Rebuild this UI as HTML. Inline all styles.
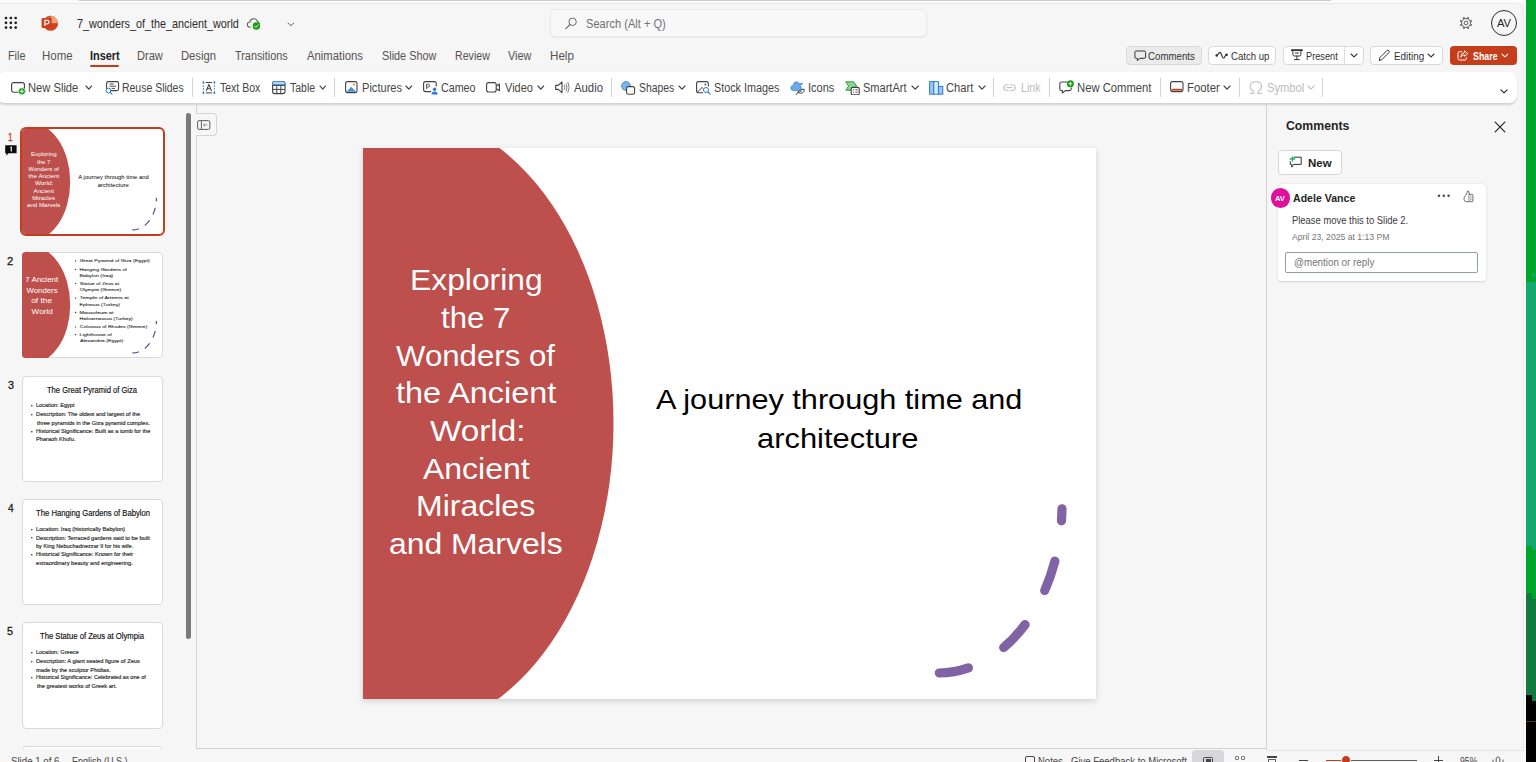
<!DOCTYPE html>
<html>
<head>
<meta charset="utf-8">
<title>7_wonders_of_the_ancient_world</title>
<style>
*{box-sizing:border-box;margin:0;padding:0}
html,body{width:1536px;height:762px;overflow:hidden;background:#f6f6f7;font-family:"Liberation Sans",sans-serif;color:#242424}
.abs{position:absolute}
.t{position:absolute;white-space:nowrap;line-height:1;transform-origin:0 0;font-family:"Liberation Sans",sans-serif}
#app{position:absolute;left:0;top:0;width:1536px;height:762px;overflow:hidden;background:#f6f6f7}
#ribbon{position:absolute;left:-3px;top:71.8px;width:1519.8px;height:31.4px;background:#fff;border-radius:8px;box-shadow:0 1.2px 2px rgba(0,0,0,.15)}
#slide{position:absolute;left:363px;top:148px;width:733px;height:551px;background:#fff;box-shadow:0 2px 6px rgba(0,0,0,.16);overflow:hidden}
</style>
</head>
<body>
<div id="app">
<!-- title bar -->
<div class="abs" style="left:0.00px;top:0.00px;width:1526.00px;height:3.20px;background:#fbfbfb"></div>
<div class="abs" style="left:78.60px;top:0.00px;width:1252.40px;height:0.90px;background:#cdcdcb"></div>
<svg class="abs" style="left:0.00px;top:0.00px;" width="24.00" height="40.00" viewBox="0 0 24 40" fill="none"><circle cx="6.00" cy="18.00" r="1.35" fill="#1b1b1b"/><circle cx="10.85" cy="18.00" r="1.35" fill="#1b1b1b"/><circle cx="15.70" cy="18.00" r="1.35" fill="#1b1b1b"/><circle cx="6.00" cy="22.80" r="1.35" fill="#1b1b1b"/><circle cx="10.85" cy="22.80" r="1.35" fill="#1b1b1b"/><circle cx="15.70" cy="22.80" r="1.35" fill="#1b1b1b"/><circle cx="6.00" cy="27.60" r="1.35" fill="#1b1b1b"/><circle cx="10.85" cy="27.60" r="1.35" fill="#1b1b1b"/><circle cx="15.70" cy="27.60" r="1.35" fill="#1b1b1b"/></svg>
<svg class="abs" style="left:38.00px;top:12.00px;" width="24.00" height="22.00" viewBox="38 12 24 22" fill="none"><defs><clipPath id="lc"><circle cx="50.6" cy="23.2" r="7.4"/></clipPath></defs><g clip-path="url(#lc)"><rect x="43" y="15" width="16" height="17" fill="#d9482a"/><rect x="43" y="15" width="8" height="8.4" fill="#e2593f"/><rect x="51" y="15" width="8" height="8.4" fill="#f0a372"/><rect x="43" y="23.4" width="16" height="9" fill="#cf4422"/></g><rect x="41.6" y="18.1" width="10.1" height="9.9" rx="0.8" fill="#c9411d"/><path d="M44.9 26 V20.3 H47 Q49 20.3 49 22.1 Q49 23.9 47 23.9 H45" stroke="#fbeee9" stroke-width="1.25" fill="none"/></svg>
<span class="t" style="left:77.36px;top:18.00px;font-size:12.60px;color:#2b2b2b;transform:scaleX(0.8593);">7_wonders_of_the_ancient_world</span>
<svg class="abs" style="left:247.20px;top:17.00px;" width="14.00" height="13.00" viewBox="0 0 14 13" fill="none"><path d="M3.2 10.2 H2.9 A2.6 2.6 0 0 1 2.9 5 A3.9 3.9 0 0 1 10.4 4.3 A2.9 2.9 0 0 1 12.3 6.4" stroke="#5c5c5c" stroke-width="1.1" stroke-linecap="round" fill="none"/><circle cx="9.4" cy="9" r="3.7" fill="#13a10e"/><path d="M7.7 9.1 L8.9 10.3 L11.1 7.9" stroke="#fff" stroke-width="1" fill="none" stroke-linecap="round" stroke-linejoin="round"/></svg>
<svg class="abs" style="left:286.50px;top:21.90px;" width="7.80" height="4.75" viewBox="0 0 7.8 4.75" fill="none"><path d="M1 1 L3.90 3.75 L6.80 1" stroke="#616161" stroke-width="1.00" stroke-linecap="round" stroke-linejoin="round"/></svg>
<div class="abs" style="left:550.00px;top:9.00px;width:377.00px;height:28.00px;background:#f8f8f8;border:1px solid #e9e9e9;border-radius:5px;box-shadow:0 1px 1px rgba(0,0,0,.05)"></div>
<svg class="abs" style="left:564.50px;top:17.30px;" width="12.50" height="12.50" viewBox="0 0 12.5 12.5" fill="none"><circle cx="7.6" cy="4.8" r="3.7" stroke="#6b6b6b" stroke-width="1"/><path d="M5 7.5 L0.8 11.7" stroke="#6b6b6b" stroke-width="1.1" stroke-linecap="round"/></svg>
<span class="t" style="left:586.40px;top:18.00px;font-size:12.00px;color:#707070;transform:scaleX(0.9235);">Search (Alt + Q)</span>
<svg class="abs" style="left:1458.60px;top:16.20px;" width="14.00" height="14.00" viewBox="0 0 14 14" fill="none"><g transform="translate(7,7)" stroke="#505050" fill="none"><circle r="1.9" stroke-width="0.9"/><circle r="4.5" stroke-width="0.9"/><path d="M4.53 1.80 L5.73 2.37" stroke-width="1.7"/><path d="M1.88 4.34 L2.37 5.73" stroke-width="1.7"/><path d="M-1.88 4.34 L-2.37 5.73" stroke-width="1.7"/><path d="M-4.53 1.80 L-5.73 2.37" stroke-width="1.7"/><path d="M-4.53 -1.80 L-5.73 -2.37" stroke-width="1.7"/><path d="M-1.88 -4.34 L-2.37 -5.73" stroke-width="1.7"/><path d="M1.88 -4.34 L2.37 -5.73" stroke-width="1.7"/><path d="M4.53 -1.80 L5.73 -2.37" stroke-width="1.7"/></g></svg>
<div class="abs" style="left:1491.20px;top:10.20px;width:26.00px;height:26.00px;border:1px solid #2b2b2b;border-radius:50%;"></div>
<span class="t" style="left:1497.30px;top:19.00px;font-size:10.00px;color:#242424;transform:scaleX(1.1155);">AV</span>
<!-- tabs -->
<span class="t" style="left:8.33px;top:50.00px;font-size:12.00px;color:#555250;transform:scaleX(0.9020);">File</span>
<span class="t" style="left:41.78px;top:50.00px;font-size:12.00px;color:#555250;transform:scaleX(0.9561);">Home</span>
<span class="t" style="left:136.81px;top:50.00px;font-size:12.00px;color:#555250;transform:scaleX(0.9228);">Draw</span>
<span class="t" style="left:180.90px;top:50.00px;font-size:12.00px;color:#555250;transform:scaleX(0.9343);">Design</span>
<span class="t" style="left:234.68px;top:50.00px;font-size:12.00px;color:#555250;transform:scaleX(0.9050);">Transitions</span>
<span class="t" style="left:307.20px;top:50.00px;font-size:12.00px;color:#555250;transform:scaleX(0.9415);">Animations</span>
<span class="t" style="left:381.71px;top:50.00px;font-size:12.00px;color:#555250;transform:scaleX(0.9056);">Slide Show</span>
<span class="t" style="left:454.75px;top:50.00px;font-size:12.00px;color:#555250;transform:scaleX(0.8847);">Review</span>
<span class="t" style="left:508.37px;top:50.00px;font-size:12.00px;color:#555250;transform:scaleX(0.9070);">View</span>
<span class="t" style="left:549.77px;top:50.00px;font-size:12.00px;color:#555250;transform:scaleX(0.9690);">Help</span>
<span class="t" style="left:89.69px;top:50.00px;font-size:12.00px;color:#242424;font-weight:700;transform:scaleX(0.9097);">Insert</span>
<div class="abs" style="left:89.80px;top:64.80px;width:29.60px;height:2.00px;background:#c43e1c;border-radius:1px"></div>
<div class="abs" style="left:1126.40px;top:45.90px;width:75.30px;height:18.90px;border:1px solid #d9d9d9;border-radius:4px;background:#ebebeb"></div>
<div class="abs" style="left:1208.40px;top:45.90px;width:67.90px;height:18.90px;border:1px solid #d9d9d9;border-radius:4px;background:#fff"></div>
<div class="abs" style="left:1283.40px;top:45.90px;width:80.20px;height:18.90px;border:1px solid #d9d9d9;border-radius:4px;background:#fff"></div>
<div class="abs" style="left:1344.30px;top:46.50px;width:1.00px;height:17.80px;background:#dcdcdc"></div>
<div class="abs" style="left:1370.30px;top:45.90px;width:72.50px;height:18.90px;border:1px solid #d9d9d9;border-radius:4px;background:#fff"></div>
<div class="abs" style="left:1449.50px;top:45.90px;width:67.30px;height:18.90px;border-radius:4px;background:#c43e1c"></div>
<span class="t" style="left:1148.32px;top:51.00px;font-size:11.00px;color:#323130;transform:scaleX(0.8804);">Comments</span>
<span class="t" style="left:1231.22px;top:51.00px;font-size:11.00px;color:#323130;transform:scaleX(0.8690);">Catch up</span>
<span class="t" style="left:1305.86px;top:51.00px;font-size:11.00px;color:#323130;transform:scaleX(0.8360);">Present</span>
<span class="t" style="left:1393.51px;top:51.00px;font-size:11.00px;color:#323130;transform:scaleX(0.8951);">Editing</span>
<span class="t" style="left:1472.56px;top:51.00px;font-size:11.00px;color:#ffffff;font-weight:700;transform:scaleX(0.8029);">Share</span>
<svg class="abs" style="left:1133.50px;top:49.80px;" width="13.00" height="12.00" viewBox="0 0 13 12" fill="none"><path d="M2.2 1 H10.3 Q11.6 1 11.6 2.3 V7 Q11.6 8.3 10.3 8.3 H6 L3.4 10.6 V8.3 H2.2 Q0.9 8.3 0.9 7 V2.3 Q0.9 1 2.2 1 Z" stroke="#323130" stroke-width="1" stroke-linejoin="round"/></svg>
<svg class="abs" style="left:1215.30px;top:50.80px;" width="14.00" height="8.50" viewBox="0 0 14 8.5" fill="none"><path d="M1.6 4.4 C3.2 4.4 3.4 1.4 4.9 1.4 C6.6 1.4 6.8 7.2 8.5 7.2 C10 7.2 10.2 3.6 11.6 3.6" stroke="#323130" stroke-width="1.15" stroke-linecap="round" fill="none"/><circle cx="1.7" cy="4.5" r="1.25" fill="#323130"/><circle cx="11.6" cy="3.7" r="1.25" fill="#323130"/></svg>
<svg class="abs" style="left:1290.80px;top:48.90px;" width="12.00" height="12.00" viewBox="0 0 12 12" fill="none"><path d="M0.6 1.2 H11.2" stroke="#323130" stroke-width="1.7" stroke-linecap="round"/><path d="M1.9 1.6 V5.6 Q1.9 7 3.3 7 H8.5 Q9.9 7 9.9 5.6 V1.6 M5.9 7 V10.4 M3.4 10.6 H8.4" stroke="#323130" stroke-width="1" stroke-linecap="round" stroke-linejoin="round" fill="none"/><path d="M3.9 4 H7.9" stroke="#323130" stroke-width="1"/></svg>
<svg class="abs" style="left:1349.73px;top:53.32px;" width="8.05" height="4.91" viewBox="0 0 8.05 4.9075" fill="none"><path d="M1 1 L4.02 3.91 L7.05 1" stroke="#323130" stroke-width="1.05" stroke-linecap="round" stroke-linejoin="round"/></svg>
<svg class="abs" style="left:1377.60px;top:49.20px;" width="13.00" height="13.00" viewBox="0 0 13 13" fill="none"><path d="M1.2 11.6 L1.9 8.6 L8.9 1.6 Q9.9 0.7 10.9 1.7 Q11.8 2.7 10.9 3.6 L3.9 10.6 Z" stroke="#323130" stroke-width="1" stroke-linejoin="round"/></svg>
<svg class="abs" style="left:1426.73px;top:53.32px;" width="8.05" height="4.91" viewBox="0 0 8.05 4.9075" fill="none"><path d="M1 1 L4.02 3.91 L7.05 1" stroke="#323130" stroke-width="1.05" stroke-linecap="round" stroke-linejoin="round"/></svg>
<svg class="abs" style="left:1457.00px;top:49.80px;" width="12.00" height="11.00" viewBox="0 0 12 11" fill="none"><path d="M4.6 1.7 H2.6 Q1 1.7 1 3.3 V8.4 Q1 10 2.6 10 H7.8 Q9.4 10 9.4 8.4 V7.6" stroke="#fff" stroke-width="1" stroke-linecap="round"/><path d="M7.4 0.9 L10.8 3.6 L7.4 6.3 V4.7 Q4.9 4.6 3.8 7.3 Q3.7 2.9 7.4 2.5 Z" stroke="#fff" stroke-width="0.9" stroke-linejoin="round"/></svg>
<svg class="abs" style="left:1500.53px;top:53.32px;" width="7.95" height="4.91" viewBox="0 0 7.95 4.9075" fill="none"><path d="M1 1 L3.97 3.91 L6.95 1" stroke="#ffffff" stroke-width="1.05" stroke-linecap="round" stroke-linejoin="round"/></svg>
<!-- ribbon -->
<div id="ribbon"></div>
<svg class="abs" style="left:10.50px;top:81.80px;" width="15.00" height="13.00" viewBox="0 0 15 13" fill="none"><rect x="0.6" y="0.6" width="12.8" height="9.6" rx="2" stroke="#424242" stroke-width="1.15"/><circle cx="10.9" cy="9.3" r="3.5" fill="#13a10e" stroke="#fff" stroke-width="0.6"/><path d="M10.9 7.5 V11.1 M9.1 9.3 H12.7" stroke="#fff" stroke-width="1"/></svg>
<span class="t" style="left:28.31px;top:82.00px;font-size:12.00px;color:#454545;transform:scaleX(0.9309);">New Slide</span>
<svg class="abs" style="left:84.78px;top:85.28px;" width="7.65" height="5.22" viewBox="0 0 7.65 5.2225" fill="none"><path d="M1 1 L3.82 4.22 L6.65 1" stroke="#424242" stroke-width="1.15" stroke-linecap="round" stroke-linejoin="round"/></svg>
<svg class="abs" style="left:105.00px;top:81.20px;" width="15.00" height="14.00" viewBox="0 0 15 14" fill="none"><rect x="1.6" y="0.6" width="12" height="9" rx="1.8" stroke="#424242" stroke-width="1.1"/><path d="M4.6 3 H8.6 M4.6 5.2 H11 M6.6 7.4 H10" stroke="#424242" stroke-width="0.95"/><circle cx="3.4" cy="9.6" r="2.4" stroke="#2b7cd3" stroke-width="1" fill="#fff"/><path d="M5.2 11.4 L7 13.2" stroke="#2b7cd3" stroke-width="1.1" stroke-linecap="round"/></svg>
<span class="t" style="left:122.46px;top:82.00px;font-size:12.00px;color:#454545;transform:scaleX(0.8719);">Reuse Slides</span>
<div class="abs" style="left:192.20px;top:78.00px;width:1.00px;height:18.60px;background:#d4d4d4"></div>
<svg class="abs" style="left:202.00px;top:80.60px;" width="14.00" height="13.50" viewBox="0 0 14 13.5" fill="none"><path d="M1.4 1.4 V12 M12.4 1.4 V12" stroke="#2b88d8" stroke-width="1" stroke-dasharray="1.6 1.3"/><path d="M3.8 1.5 H10 M3.8 11.9 H10" stroke="#424242" stroke-width="1"/><path d="M4.3 10 L6.9 3.4 L9.5 10 M5.2 7.8 H8.6" stroke="#424242" stroke-width="1.05" stroke-linejoin="round"/><circle cx="1.4" cy="1.3" r="1" fill="#2b88d8"/><circle cx="12.4" cy="1.3" r="1" fill="#2b88d8"/><circle cx="1.4" cy="12.1" r="1" fill="#2b88d8"/><circle cx="12.4" cy="12.1" r="1" fill="#2b88d8"/></svg>
<span class="t" style="left:220.19px;top:82.00px;font-size:12.00px;color:#454545;transform:scaleX(0.8760);">Text Box</span>
<svg class="abs" style="left:271.80px;top:81.00px;" width="14.00" height="13.50" viewBox="0 0 14 13.5" fill="none"><rect x="0.6" y="0.6" width="12.4" height="12" rx="2" stroke="#424242" stroke-width="1.1"/><path d="M0.6 3.6 V2.6 Q0.6 0.6 2.6 0.6 H11 Q13 0.6 13 2.6 V3.6 Z" fill="#b9dbf7" stroke="#3a8fde" stroke-width="0.9"/><path d="M0.6 4.4 H13 M0.6 8.4 H13 M4.8 4.4 V12.6 M8.8 4.4 V12.6" stroke="#424242" stroke-width="1"/></svg>
<span class="t" style="left:289.99px;top:82.00px;font-size:12.00px;color:#454545;transform:scaleX(0.8736);">Table</span>
<svg class="abs" style="left:318.77px;top:85.28px;" width="7.55" height="5.22" viewBox="0 0 7.55 5.2225" fill="none"><path d="M1 1 L3.78 4.22 L6.55 1" stroke="#424242" stroke-width="1.15" stroke-linecap="round" stroke-linejoin="round"/></svg>
<div class="abs" style="left:334.10px;top:78.00px;width:1.00px;height:18.60px;background:#d4d4d4"></div>
<svg class="abs" style="left:344.80px;top:81.30px;" width="13.00" height="12.50" viewBox="0 0 13 12.5" fill="none"><rect x="0.6" y="0.6" width="11.4" height="11" rx="2" stroke="#424242" stroke-width="1.1"/><path d="M1.4 10.8 L6.2 5.8 L11.2 10.8 Z" fill="#4a90d9"/><circle cx="8.9" cy="3.6" r="1.1" fill="#e8833a"/></svg>
<span class="t" style="left:361.61px;top:82.00px;font-size:12.00px;color:#454545;transform:scaleX(0.9233);">Pictures</span>
<svg class="abs" style="left:405.18px;top:85.28px;" width="7.65" height="5.22" viewBox="0 0 7.65 5.2225" fill="none"><path d="M1 1 L3.83 4.22 L6.65 1" stroke="#424242" stroke-width="1.15" stroke-linecap="round" stroke-linejoin="round"/></svg>
<svg class="abs" style="left:423.00px;top:81.30px;" width="15.00" height="14.00" viewBox="0 0 15 14" fill="none"><path d="M8 10.6 H2.4 Q0.6 10.6 0.6 8.8 V2.4 Q0.6 0.6 2.4 0.6 H11.4 Q13.2 0.6 13.2 2.4 V5.4" stroke="#424242" stroke-width="1.1" fill="none"/><path d="M3.6 8 V3.2 H5.2 Q6.6 3.2 6.6 4.6 Q6.6 6 5.2 6 H3.8" stroke="#424242" stroke-width="0.9" fill="none"/><circle cx="11.6" cy="8.2" r="1.7" fill="#2b7cd3"/><path d="M8.6 13.4 Q8.6 10.6 11.6 10.6 Q14.6 10.6 14.6 13.4 Z" fill="#2b7cd3"/></svg>
<span class="t" style="left:441.17px;top:82.00px;font-size:12.00px;color:#454545;transform:scaleX(0.8912);">Cameo</span>
<svg class="abs" style="left:486.40px;top:82.20px;" width="14.50" height="11.00" viewBox="0 0 14.5 11" fill="none"><rect x="0.6" y="0.6" width="9.6" height="9.4" rx="2" stroke="#424242" stroke-width="1.1"/><path d="M10.4 4 L13.4 2 V8.8 L10.4 6.8" stroke="#424242" stroke-width="1.1" stroke-linejoin="round"/></svg>
<span class="t" style="left:505.37px;top:82.00px;font-size:12.00px;color:#454545;transform:scaleX(0.9185);">Video</span>
<svg class="abs" style="left:537.48px;top:85.28px;" width="7.65" height="5.22" viewBox="0 0 7.65 5.2225" fill="none"><path d="M1 1 L3.82 4.22 L6.65 1" stroke="#424242" stroke-width="1.15" stroke-linecap="round" stroke-linejoin="round"/></svg>
<svg class="abs" style="left:555.00px;top:81.20px;" width="16.50" height="13.00" viewBox="0 0 16.5 13" fill="none"><path d="M0.7 4.4 H3.2 L7 1 V11.6 L3.2 8.4 H0.7 Z" stroke="#424242" stroke-width="1.1" stroke-linejoin="round"/><path d="M9.4 4.2 Q10.6 6.3 9.4 8.4 M11.2 2.8 Q13 6.3 11.2 9.8 M13 1.4 Q15.6 6.3 13 11.2" stroke="#707070" stroke-width="0.9" stroke-linecap="round"/></svg>
<span class="t" style="left:574.00px;top:82.00px;font-size:12.00px;color:#454545;transform:scaleX(0.9434);">Audio</span>
<div class="abs" style="left:611.20px;top:78.00px;width:1.00px;height:18.60px;background:#d4d4d4"></div>
<svg class="abs" style="left:621.00px;top:80.80px;" width="14.50" height="14.00" viewBox="0 0 14.5 14" fill="none"><circle cx="5" cy="5" r="4.4" fill="#7db4ec" stroke="#2b7cd3" stroke-width="0.8"/><rect x="5.6" y="5.6" width="8" height="7.6" rx="1.8" fill="#fff" stroke="#424242" stroke-width="1.1"/></svg>
<span class="t" style="left:639.13px;top:82.00px;font-size:12.00px;color:#454545;transform:scaleX(0.8654);">Shapes</span>
<svg class="abs" style="left:677.98px;top:85.28px;" width="8.05" height="5.22" viewBox="0 0 8.05 5.2225" fill="none"><path d="M1 1 L4.02 4.22 L7.05 1" stroke="#424242" stroke-width="1.15" stroke-linecap="round" stroke-linejoin="round"/></svg>
<svg class="abs" style="left:696.00px;top:81.20px;" width="15.50" height="14.00" viewBox="0 0 15.5 14" fill="none"><path d="M7 11.8 H2.4 Q0.6 11.8 0.6 10 V2.4 Q0.6 0.6 2.4 0.6 H10.6 Q12.4 0.6 12.4 2.4 V5.6" stroke="#424242" stroke-width="1.1" fill="none"/><path d="M1.6 11 L6 6.4 L7.4 7.8" stroke="#424242" stroke-width="1" fill="none"/><circle cx="9.4" cy="3.4" r="0.9" fill="#424242"/><circle cx="10" cy="9" r="2.5" stroke="#2b7cd3" stroke-width="1" fill="#fff"/><path d="M11.9 10.9 L14.2 13.2" stroke="#2b7cd3" stroke-width="1.2" stroke-linecap="round"/></svg>
<span class="t" style="left:714.11px;top:82.00px;font-size:12.00px;color:#454545;transform:scaleX(0.9006);">Stock Images</span>
<svg class="abs" style="left:789.80px;top:80.80px;" width="15.50" height="14.50" viewBox="0 0 15.5 14.5" fill="none"><path d="M3.2 9.6 Q0.4 9 0.8 6.4 Q1.2 4.6 3.4 4.4 Q3.2 1.6 5.6 0.8 Q8.2 0.4 8.8 2.6 L12.6 2.2 Q11.6 4.4 9.8 4.6 Q12.4 6.4 10.6 9 Q9.2 10.4 6.6 9.8 Z" fill="#6ba8e5" stroke="#3482d3" stroke-width="0.7" stroke-linejoin="round"/><path d="M6.2 13.6 Q7.6 11 9.4 9.6 Q12 7.8 14.2 8.2 Q14.6 10.8 12.4 12 Q10.4 12.8 8.4 11.6" stroke="#424242" stroke-width="1" fill="#fff" stroke-linejoin="round" stroke-linecap="round"/><path d="M8.2 11.8 L11.8 9.8" stroke="#424242" stroke-width="0.8"/></svg>
<span class="t" style="left:807.76px;top:82.00px;font-size:12.00px;color:#454545;transform:scaleX(0.9198);">Icons</span>
<svg class="abs" style="left:845.20px;top:80.80px;" width="15.00" height="14.50" viewBox="0 0 15 14.5" fill="none"><path d="M0.8 0.8 H8.6 L11.6 5 L8.6 9.2 H0.8 L3.6 5 Z" fill="#8fd19e" stroke="#13a10e" stroke-width="0.9" stroke-linejoin="round"/><rect x="6.2" y="6.4" width="8" height="7.4" rx="1.4" fill="#fff" stroke="#424242" stroke-width="1.1"/><path d="M8 8.8 H9.2 M8 11.2 H9.2 M10.4 8.8 H12.6 M10.4 11.2 H12.6" stroke="#424242" stroke-width="0.9"/></svg>
<span class="t" style="left:863.25px;top:82.00px;font-size:12.00px;color:#454545;transform:scaleX(0.9189);">SmartArt</span>
<svg class="abs" style="left:910.77px;top:85.28px;" width="8.35" height="5.22" viewBox="0 0 8.35 5.2225" fill="none"><path d="M1 1 L4.17 4.22 L7.35 1" stroke="#424242" stroke-width="1.15" stroke-linecap="round" stroke-linejoin="round"/></svg>
<svg class="abs" style="left:928.80px;top:80.80px;" width="15.00" height="14.00" viewBox="0 0 15 14" fill="none"><rect x="0.6" y="0.6" width="4.2" height="12.6" fill="#9cc6ee" stroke="#2b7cd3" stroke-width="1"/><rect x="4.8" y="0.6" width="4.6" height="12.6" fill="#dcebf9" stroke="#2b7cd3" stroke-width="1"/><rect x="9.4" y="5.4" width="4.4" height="7.8" fill="#9cc6ee" stroke="#2b7cd3" stroke-width="1"/></svg>
<span class="t" style="left:946.44px;top:82.00px;font-size:12.00px;color:#454545;transform:scaleX(0.9327);">Chart</span>
<svg class="abs" style="left:977.77px;top:85.28px;" width="8.05" height="5.22" viewBox="0 0 8.05 5.2225" fill="none"><path d="M1 1 L4.02 4.22 L7.05 1" stroke="#424242" stroke-width="1.15" stroke-linecap="round" stroke-linejoin="round"/></svg>
<div class="abs" style="left:993.20px;top:78.00px;width:1.00px;height:18.60px;background:#d4d4d4"></div>
<svg class="abs" style="left:1003.00px;top:84.40px;" width="13.50" height="7.50" viewBox="0 0 13.5 7.5" fill="none"><path d="M5.4 0.7 H3.6 A2.9 2.9 0 0 0 3.6 6.5 H5.4 M7.6 0.7 H9.4 A2.9 2.9 0 0 1 9.4 6.5 H7.6 M3.8 3.6 H9.2" stroke="#c2c2c2" stroke-width="1.1" stroke-linecap="round"/></svg>
<span class="t" style="left:1020.85px;top:82.00px;font-size:12.00px;color:#bdbdbd;transform:scaleX(0.8867);">Link</span>
<div class="abs" style="left:1049.10px;top:78.00px;width:1.00px;height:18.60px;background:#d4d4d4"></div>
<svg class="abs" style="left:1058.50px;top:80.20px;" width="15.50" height="14.00" viewBox="0 0 15.5 14" fill="none"><path d="M8.4 2 H2.6 Q0.8 2 0.8 3.8 V8.8 Q0.8 10.6 2.6 10.6 H3.4 V13 L6.4 10.6 H10.4 Q12.2 10.6 12.2 8.8 V7.6" stroke="#424242" stroke-width="1.1" stroke-linejoin="round" fill="none"/><circle cx="11.4" cy="3.7" r="3.5" fill="#13a10e"/><path d="M11.4 1.9 V5.5 M9.6 3.7 H13.2" stroke="#fff" stroke-width="1"/></svg>
<span class="t" style="left:1076.60px;top:82.00px;font-size:12.00px;color:#454545;transform:scaleX(0.9383);">New Comment</span>
<div class="abs" style="left:1159.70px;top:78.00px;width:1.00px;height:18.60px;background:#d4d4d4"></div>
<svg class="abs" style="left:1169.50px;top:81.30px;" width="14.00" height="11.50" viewBox="0 0 14 11.5" fill="none"><rect x="0.6" y="0.6" width="12.4" height="10" rx="2" stroke="#424242" stroke-width="1.1"/><path d="M1.6 8.7 H12" stroke="#c43e1c" stroke-width="1.8"/></svg>
<span class="t" style="left:1186.59px;top:82.00px;font-size:12.00px;color:#454545;transform:scaleX(0.9451);">Footer</span>
<svg class="abs" style="left:1223.47px;top:85.28px;" width="8.05" height="5.22" viewBox="0 0 8.05 5.2225" fill="none"><path d="M1 1 L4.02 4.22 L7.05 1" stroke="#424242" stroke-width="1.15" stroke-linecap="round" stroke-linejoin="round"/></svg>
<div class="abs" style="left:1238.90px;top:78.00px;width:1.00px;height:18.60px;background:#d4d4d4"></div>
<svg class="abs" style="left:1248.80px;top:81.20px;" width="14.00" height="13.50" viewBox="0 0 14 13.5" fill="none"><path d="M0.8 12.4 H4.8 V10.6 Q1.2 8.6 1.2 5.6 Q1.2 0.8 6.9 0.8 Q12.6 0.8 12.6 5.6 Q12.6 8.6 9 10.6 V12.4 H13" stroke="#c2c2c2" stroke-width="1.1" stroke-linejoin="round"/></svg>
<span class="t" style="left:1266.50px;top:82.00px;font-size:12.00px;color:#bdbdbd;transform:scaleX(0.9302);">Symbol</span>
<svg class="abs" style="left:1306.78px;top:85.28px;" width="8.05" height="5.22" viewBox="0 0 8.05 5.2225" fill="none"><path d="M1 1 L4.02 4.22 L7.05 1" stroke="#c2c2c2" stroke-width="1.15" stroke-linecap="round" stroke-linejoin="round"/></svg>
<div class="abs" style="left:1322.20px;top:78.00px;width:1.00px;height:18.60px;background:#d4d4d4"></div>
<svg class="abs" style="left:1499.58px;top:88.78px;" width="8.05" height="4.82" viewBox="0 0 8.05 4.8225" fill="none"><path d="M1 1 L4.02 3.82 L7.05 1" stroke="#323130" stroke-width="1.15" stroke-linecap="round" stroke-linejoin="round"/></svg>
<!-- left panel -->
<span class="t" style="left:8.18px;top:132.00px;font-size:10.50px;color:#c8401c;transform:scaleX(0.7927);-webkit-text-stroke:0.3px #c8401c;">1</span>
<span class="t" style="left:7.34px;top:256.00px;font-size:10.50px;color:#1b1b1b;transform:scaleX(1.0617);-webkit-text-stroke:0.3px #1b1b1b;">2</span>
<span class="t" style="left:7.50px;top:380.00px;font-size:10.50px;color:#1b1b1b;transform:scaleX(1.0226);-webkit-text-stroke:0.3px #1b1b1b;">3</span>
<span class="t" style="left:7.67px;top:503.00px;font-size:10.50px;color:#1b1b1b;transform:scaleX(0.9618);-webkit-text-stroke:0.3px #1b1b1b;">4</span>
<span class="t" style="left:7.47px;top:626.00px;font-size:10.50px;color:#1b1b1b;transform:scaleX(1.0226);-webkit-text-stroke:0.3px #1b1b1b;">5</span>
<svg class="abs" style="left:4.60px;top:144.80px;" width="12.00" height="11.50" viewBox="0 0 12 11.5" fill="none"><path d="M0.2 0.2 H11.6 V8.2 H3.6 L1.4 10.8 V8.2 H0.2 Z" fill="#0c0c0c"/><path d="M5.3 2.9 L6.3 2.3 V6.4" stroke="#fff" stroke-width="1.1" fill="none"/></svg>
<div class="abs" style="left:20.00px;top:126.50px;width:145.00px;height:109.60px;background:#fff;border:2px solid #c43e1c;border-radius:6px"></div>
<div class="abs" style="left:22px;top:128.5px;width:141px;height:105.6px;overflow:hidden;border-radius:4px"><div class="abs" style="left:0;top:0;width:733px;height:551px;transform:scale(0.19236);transform-origin:0 0"><svg class="abs" style="left:0;top:0" width="733" height="551" viewBox="0 0 733 551"><ellipse cx="38.5" cy="275" rx="212" ry="310" fill="#bd4f4c"/><g stroke="#5d4b9c" stroke-width="6.4" stroke-linecap="round" fill="none"><path d="M698.97 360.81 A124 168 0 0 1 698.45 372.81"/><path d="M691.89 413.08 A124 168 0 0 1 681.73 442.52"/><path d="M662.07 476.62 A124 168 0 0 1 640.71 499.47"/><path d="M605.42 519.87 A124 168 0 0 1 576.30 524.99"/></g></svg>
<span class="t" style="left:47.05px;top:118.00px;font-size:28.80px;color:#ffffff;transform:scaleX(1.1051);">Exploring</span>
<span class="t" style="left:77.83px;top:156.00px;font-size:28.80px;color:#ffffff;transform:scaleX(1.0819);">the 7</span>
<span class="t" style="left:33.32px;top:194.00px;font-size:28.80px;color:#ffffff;transform:scaleX(1.0836);">Wonders of</span>
<span class="t" style="left:32.91px;top:231.00px;font-size:28.80px;color:#ffffff;transform:scaleX(1.1246);">the Ancient</span>
<span class="t" style="left:66.92px;top:269.00px;font-size:28.80px;color:#ffffff;transform:scaleX(1.1551);">World:</span>
<span class="t" style="left:60.10px;top:307.00px;font-size:28.80px;color:#ffffff;transform:scaleX(1.1105);">Ancient</span>
<span class="t" style="left:53.34px;top:344.00px;font-size:28.80px;color:#ffffff;transform:scaleX(1.1117);">Miracles</span>
<span class="t" style="left:26.15px;top:382.00px;font-size:28.80px;color:#ffffff;transform:scaleX(1.1070);">and Marvels</span>
<span class="t" style="left:292.60px;top:238.00px;font-size:27.40px;color:#000000;transform:scaleX(1.1191);">A journey through time and</span>
<span class="t" style="left:394.19px;top:277.00px;font-size:27.40px;color:#000000;transform:scaleX(1.1281);">architecture</span>
</div></div>
<div class="abs" style="left:21.80px;top:251.60px;width:141.50px;height:106.80px;background:#fff;border:1px solid #d9d9d9;border-radius:4px"></div>
<div class="abs" style="left:22.3px;top:252.1px;width:140.5px;height:105.8px;overflow:hidden;border-radius:3.5px"><div class="abs" style="left:0;top:0;width:733px;height:551px;transform:scale(0.19236);transform-origin:0 0"><svg class="abs" style="left:0;top:0" width="733" height="551" viewBox="0 0 733 551"><ellipse cx="38.5" cy="275" rx="212" ry="310" fill="#bd4f4c"/><g stroke="#5d4b9c" stroke-width="6.4" stroke-linecap="round" fill="none"><path d="M698.97 360.81 A124 168 0 0 1 698.45 372.81"/><path d="M691.89 413.08 A124 168 0 0 1 681.73 442.52"/><path d="M662.07 476.62 A124 168 0 0 1 640.71 499.47"/><path d="M605.42 519.87 A124 168 0 0 1 576.30 524.99"/></g></svg>
<span class="t" style="left:16.63px;top:122.00px;font-size:39.93px;color:#ffffff;transform:scaleX(1.0453);">7 Ancient</span>
<span class="t" style="left:23.29px;top:178.00px;font-size:39.93px;color:#ffffff;transform:scaleX(1.0197);">Wonders</span>
<span class="t" style="left:48.18px;top:234.00px;font-size:39.93px;color:#ffffff;transform:scaleX(1.0824);">of the</span>
<span class="t" style="left:49.80px;top:289.00px;font-size:39.93px;color:#ffffff;transform:scaleX(1.0662);">World</span>
<span class="t" style="left:299.64px;top:36.00px;font-size:22.51px;color:#333333;transform:scaleX(1.2103);-webkit-text-stroke:0.55px #333333;">Great Pyramid of Giza (Egypt)</span>
<div class="abs" style="left:275.44px;top:43.05px;width:6.60px;height:6.60px;background:#2a2a2a;border-radius:50%"></div>
<span class="t" style="left:298.80px;top:79.00px;font-size:22.51px;color:#333333;transform:scaleX(1.2209);-webkit-text-stroke:0.55px #333333;">Hanging Gardens of</span>
<div class="abs" style="left:275.44px;top:86.71px;width:6.60px;height:6.60px;background:#2a2a2a;border-radius:50%"></div>
<span class="t" style="left:298.77px;top:111.00px;font-size:22.51px;color:#333333;transform:scaleX(1.2376);-webkit-text-stroke:0.55px #333333;">Babylon (Iraq)</span>
<span class="t" style="left:299.79px;top:153.00px;font-size:22.51px;color:#333333;transform:scaleX(1.1968);-webkit-text-stroke:0.55px #333333;">Statue of Zeus at</span>
<div class="abs" style="left:275.44px;top:160.53px;width:6.60px;height:6.60px;background:#2a2a2a;border-radius:50%"></div>
<span class="t" style="left:299.77px;top:186.00px;font-size:22.51px;color:#333333;transform:scaleX(1.2134);-webkit-text-stroke:0.55px #333333;">Olympia (Greece)</span>
<span class="t" style="left:300.43px;top:228.00px;font-size:22.51px;color:#333333;transform:scaleX(1.2526);-webkit-text-stroke:0.55px #333333;">Temple of Artemis at</span>
<div class="abs" style="left:275.44px;top:235.91px;width:6.60px;height:6.60px;background:#2a2a2a;border-radius:50%"></div>
<span class="t" style="left:298.85px;top:261.00px;font-size:22.51px;color:#333333;transform:scaleX(1.1915);-webkit-text-stroke:0.55px #333333;">Ephesus (Turkey)</span>
<span class="t" style="left:298.74px;top:304.00px;font-size:22.51px;color:#333333;transform:scaleX(1.2527);-webkit-text-stroke:0.55px #333333;">Mausoleum at</span>
<div class="abs" style="left:275.44px;top:311.29px;width:6.60px;height:6.60px;background:#2a2a2a;border-radius:50%"></div>
<span class="t" style="left:298.84px;top:337.00px;font-size:22.51px;color:#333333;transform:scaleX(1.2003);-webkit-text-stroke:0.55px #333333;">Halicarnassus (Turkey)</span>
<span class="t" style="left:299.67px;top:379.00px;font-size:22.51px;color:#333333;transform:scaleX(1.1829);-webkit-text-stroke:0.55px #333333;">Colossus of Rhodes (Greece)</span>
<div class="abs" style="left:275.44px;top:386.67px;width:6.60px;height:6.60px;background:#2a2a2a;border-radius:50%"></div>
<span class="t" style="left:298.76px;top:419.00px;font-size:22.51px;color:#333333;transform:scaleX(1.2430);-webkit-text-stroke:0.55px #333333;">Lighthouse of</span>
<div class="abs" style="left:275.44px;top:426.18px;width:6.60px;height:6.60px;background:#2a2a2a;border-radius:50%"></div>
<span class="t" style="left:301.00px;top:452.00px;font-size:22.51px;color:#333333;transform:scaleX(1.2164);-webkit-text-stroke:0.55px #333333;">Alexandria (Egypt)</span>
</div></div>
<div class="abs" style="left:21.80px;top:375.70px;width:141.50px;height:106.30px;background:#fff;border:1px solid #d9d9d9;border-radius:4px"></div>
<span class="t" style="left:47.25px;top:385.67px;font-size:33.20px;color:#111111;-webkit-text-stroke:0.64px #111111;transform:scale(0.2280,0.2500);">The Great Pyramid of Giza</span>
<span class="t" style="left:36.25px;top:403.45px;font-size:19.60px;color:#333333;-webkit-text-stroke:0.68px #333333;transform:scale(0.2848,0.2500);">Location: Egypt</span>
<div class="abs" style="left:31.00px;top:405.25px;width:6.00px;height:6.00px;background:#2a2a2a;border-radius:50%;transform:scale(.26);transform-origin:0 0"></div>
<span class="t" style="left:36.24px;top:412.15px;font-size:19.60px;color:#333333;-webkit-text-stroke:0.68px #333333;transform:scale(0.2919,0.2500);">Description: The oldest and largest of the</span>
<div class="abs" style="left:31.00px;top:413.95px;width:6.00px;height:6.00px;background:#2a2a2a;border-radius:50%;transform:scale(.26);transform-origin:0 0"></div>
<span class="t" style="left:36.61px;top:420.65px;font-size:19.60px;color:#333333;-webkit-text-stroke:0.68px #333333;transform:scale(0.2911,0.2500);">three pyramids in the Giza pyramid complex.</span>
<span class="t" style="left:36.24px;top:429.05px;font-size:19.60px;color:#333333;-webkit-text-stroke:0.68px #333333;transform:scale(0.2911,0.2500);">Historical Significance: Built as a tomb for the</span>
<div class="abs" style="left:31.00px;top:430.85px;width:6.00px;height:6.00px;background:#2a2a2a;border-radius:50%;transform:scale(.26);transform-origin:0 0"></div>
<span class="t" style="left:36.25px;top:437.25px;font-size:19.60px;color:#333333;-webkit-text-stroke:0.68px #333333;transform:scale(0.2890,0.2500);">Pharaoh Khufu.</span>
<div class="abs" style="left:21.80px;top:499.20px;width:141.50px;height:106.30px;background:#fff;border:1px solid #d9d9d9;border-radius:4px"></div>
<span class="t" style="left:35.65px;top:509.17px;font-size:33.20px;color:#111111;-webkit-text-stroke:0.64px #111111;transform:scale(0.2316,0.2500);">The Hanging Gardens of Babylon</span>
<span class="t" style="left:36.24px;top:526.75px;font-size:19.60px;color:#333333;-webkit-text-stroke:0.68px #333333;transform:scale(0.2918,0.2500);">Location: Iraq (historically Babylon)</span>
<div class="abs" style="left:31.00px;top:528.55px;width:6.00px;height:6.00px;background:#2a2a2a;border-radius:50%;transform:scale(.26);transform-origin:0 0"></div>
<span class="t" style="left:36.25px;top:535.65px;font-size:19.60px;color:#333333;-webkit-text-stroke:0.68px #333333;transform:scale(0.2898,0.2500);">Description: Terraced gardens said to be built</span>
<div class="abs" style="left:31.00px;top:537.45px;width:6.00px;height:6.00px;background:#2a2a2a;border-radius:50%;transform:scale(.26);transform-origin:0 0"></div>
<span class="t" style="left:36.35px;top:544.15px;font-size:19.60px;color:#333333;-webkit-text-stroke:0.68px #333333;transform:scale(0.2861,0.2500);">by King Nebuchadnezzar II for his wife.</span>
<span class="t" style="left:36.24px;top:552.35px;font-size:19.60px;color:#333333;-webkit-text-stroke:0.68px #333333;transform:scale(0.2908,0.2500);">Historical Significance: Known for their</span>
<div class="abs" style="left:31.00px;top:554.15px;width:6.00px;height:6.00px;background:#2a2a2a;border-radius:50%;transform:scale(.26);transform-origin:0 0"></div>
<span class="t" style="left:36.46px;top:560.85px;font-size:19.60px;color:#333333;-webkit-text-stroke:0.68px #333333;transform:scale(0.2931,0.2500);">extraordinary beauty and engineering.</span>
<div class="abs" style="left:21.80px;top:622.40px;width:141.50px;height:106.30px;background:#fff;border:1px solid #d9d9d9;border-radius:4px"></div>
<span class="t" style="left:40.45px;top:632.47px;font-size:33.20px;color:#111111;-webkit-text-stroke:0.64px #111111;transform:scale(0.2310,0.2500);">The Statue of Zeus at Olympia</span>
<span class="t" style="left:36.25px;top:650.25px;font-size:19.60px;color:#333333;-webkit-text-stroke:0.68px #333333;transform:scale(0.2867,0.2500);">Location: Greece</span>
<div class="abs" style="left:31.00px;top:652.05px;width:6.00px;height:6.00px;background:#2a2a2a;border-radius:50%;transform:scale(.26);transform-origin:0 0"></div>
<span class="t" style="left:36.24px;top:659.15px;font-size:19.60px;color:#333333;-webkit-text-stroke:0.68px #333333;transform:scale(0.2906,0.2500);">Description: A giant seated figure of Zeus</span>
<div class="abs" style="left:31.00px;top:660.95px;width:6.00px;height:6.00px;background:#2a2a2a;border-radius:50%;transform:scale(.26);transform-origin:0 0"></div>
<span class="t" style="left:36.33px;top:667.65px;font-size:19.60px;color:#333333;-webkit-text-stroke:0.68px #333333;transform:scale(0.2901,0.2500);">made by the sculptor Phidias.</span>
<span class="t" style="left:36.25px;top:675.45px;font-size:19.60px;color:#333333;-webkit-text-stroke:0.68px #333333;transform:scale(0.2858,0.2500);">Historical Significance: Celebrated as one of</span>
<div class="abs" style="left:31.00px;top:677.25px;width:6.00px;height:6.00px;background:#2a2a2a;border-radius:50%;transform:scale(.26);transform-origin:0 0"></div>
<span class="t" style="left:36.61px;top:684.35px;font-size:19.60px;color:#333333;-webkit-text-stroke:0.68px #333333;transform:scale(0.2911,0.2500);">the greatest works of Greek art.</span>
<div class="abs" style="left:21.80px;top:746.00px;width:141.50px;height:20.00px;background:#fff;border:1px solid #d9d9d9;border-radius:4px"></div>
<div class="abs" style="left:186.00px;top:112.50px;width:4.60px;height:526.00px;background:#7a7a7a;border-radius:2.3px"></div>
<!-- editor -->
<div class="abs" style="left:196.00px;top:104.00px;width:1.00px;height:644.50px;background:#d4d4d4"></div>
<div class="abs" style="left:1266.00px;top:104.00px;width:1.00px;height:646.00px;background:#d4d4d4"></div>
<div class="abs" style="left:196.00px;top:747.50px;width:1071.00px;height:1.20px;background:#cfcfcf"></div>
<div class="abs" style="left:195.50px;top:113.00px;width:21.20px;height:23.20px;background:#f6f6f7;border:1px solid #d4d4d4;border-left:none;border-radius:0 4px 4px 0"></div>
<svg class="abs" style="left:196.80px;top:119.80px;" width="14.00" height="10.50" viewBox="0 0 14 10.5" fill="none"><rect x="0.6" y="0.6" width="12.2" height="8.8" rx="1.4" stroke="#616161" stroke-width="1"/><path d="M4.4 0.6 V9.4" stroke="#616161" stroke-width="1"/><path d="M10.4 5 H6.6 M8 3.4 L6.4 5 L8 6.6" stroke="#8a8a8a" stroke-width="0.9" fill="none"/></svg>
<div id="slide">
<svg class="abs" style="left:0;top:0" width="733" height="551" viewBox="0 0 733 551"><ellipse cx="38.5" cy="275" rx="212" ry="310" fill="#bd4f4c"/><g stroke="#7f63a4" stroke-width="9.2" stroke-linecap="round" fill="none"><path d="M698.97 360.81 A124 168 0 0 1 698.45 372.81"/><path d="M691.89 413.08 A124 168 0 0 1 681.73 442.52"/><path d="M662.07 476.62 A124 168 0 0 1 640.71 499.47"/><path d="M605.42 519.87 A124 168 0 0 1 576.30 524.99"/></g></svg>
<span class="t" style="left:47.05px;top:118.00px;font-size:28.80px;color:#ffffff;transform:scaleX(1.1051);">Exploring</span>
<span class="t" style="left:77.83px;top:156.00px;font-size:28.80px;color:#ffffff;transform:scaleX(1.0819);">the 7</span>
<span class="t" style="left:33.32px;top:194.00px;font-size:28.80px;color:#ffffff;transform:scaleX(1.0836);">Wonders of</span>
<span class="t" style="left:32.91px;top:231.00px;font-size:28.80px;color:#ffffff;transform:scaleX(1.1246);">the Ancient</span>
<span class="t" style="left:66.92px;top:269.00px;font-size:28.80px;color:#ffffff;transform:scaleX(1.1551);">World:</span>
<span class="t" style="left:60.10px;top:307.00px;font-size:28.80px;color:#ffffff;transform:scaleX(1.1105);">Ancient</span>
<span class="t" style="left:53.34px;top:344.00px;font-size:28.80px;color:#ffffff;transform:scaleX(1.1117);">Miracles</span>
<span class="t" style="left:26.15px;top:382.00px;font-size:28.80px;color:#ffffff;transform:scaleX(1.1070);">and Marvels</span>
<span class="t" style="left:292.60px;top:238.00px;font-size:27.40px;color:#000000;transform:scaleX(1.1191);">A journey through time and</span>
<span class="t" style="left:394.19px;top:277.00px;font-size:27.40px;color:#000000;transform:scaleX(1.1281);">architecture</span>
</div>
<!-- comments -->
<span class="t" style="left:1286.01px;top:120.00px;font-size:12.60px;color:#1f1f1f;font-weight:700;transform:scaleX(0.9730);">Comments</span>
<svg class="abs" style="left:1493.70px;top:120.70px;" width="12.00" height="12.00" viewBox="0 0 12 12" fill="none"><path d="M1.2 1.2 L10.8 10.8 M10.8 1.2 L1.2 10.8" stroke="#242424" stroke-width="1.2" stroke-linecap="round"/></svg>
<div class="abs" style="left:1277.60px;top:150.20px;width:64.20px;height:25.20px;background:#fff;border:1px solid #d6d6d6;border-radius:4px"></div>
<svg class="abs" style="left:1289.00px;top:156.00px;" width="13.50" height="12.50" viewBox="0 0 13.5 12.5" fill="none"><path d="M4.6 1.2 H12.2 V8.4 H4.6 L2.8 11.2 V8.4 H1.3 V5.2" stroke="#323130" stroke-width="1" stroke-linejoin="miter" fill="none"/><path d="M3.4 0.4 V5.6 M0.8 3 H6" stroke="#21b35a" stroke-width="1.3"/></svg>
<span class="t" style="left:1308.35px;top:157.00px;font-size:11.60px;color:#242424;font-weight:700;transform:scaleX(0.9908);">New</span>
<div class="abs" style="left:1277.60px;top:183.90px;width:208.40px;height:97.20px;background:#fff;border-radius:4px;box-shadow:0 0.5px 2px rgba(0,0,0,.16)"></div>
<div class="abs" style="left:1270.80px;top:188.30px;width:19.40px;height:19.40px;background:#e0109c;border-radius:50%"></div>
<span class="t" style="left:1275.41px;top:195.00px;font-size:7.50px;color:#ffffff;font-weight:700;transform:scaleX(0.9961);">AV</span>
<span class="t" style="left:1292.94px;top:193.00px;font-size:11.40px;color:#242424;font-weight:700;transform:scaleX(0.9280);">Adele Vance</span>
<svg class="abs" style="left:1437.40px;top:194.20px;" width="14.00" height="3.40" viewBox="0 0 14 3.4" fill="none"><circle cx="1.95" cy="1.7" r="1.25" fill="#4a4340"/><circle cx="6.8" cy="1.7" r="1.25" fill="#4a4340"/><circle cx="11.6" cy="1.7" r="1.25" fill="#4a4340"/></svg>
<svg class="abs" style="left:1463.40px;top:189.60px;" width="11.50" height="13.00" viewBox="0 0 11.5 13" fill="none"><path d="M4.9 0.8 C4 2.8 3.5 4.6 1.8 6.6 C0.3 8.4 0.9 11 3.2 11.7 H9.2 Q9.9 11.7 9.9 11 V5.2 Q9.9 4.3 9 4.3 H6 C6.2 2.6 6.2 1 4.9 0.8 Z" stroke="#555" stroke-width="0.85" stroke-linejoin="round" fill="none"/><path d="M5.9 4.3 V11.7" stroke="#6a6a6a" stroke-width="0.8"/><path d="M7 6.2 H8.6 M7 8 H8.6 M7 9.8 H8.6" stroke="#8a7a78" stroke-width="0.8"/></svg>
<span class="t" style="left:1292.25px;top:216.00px;font-size:10.40px;color:#3a3a3a;transform:scaleX(0.9062);">Please move this to Slide 2.</span>
<span class="t" style="left:1292.00px;top:232.00px;font-size:9.50px;color:#757575;transform:scaleX(0.9094);">April 23, 2025 at 1:13 PM</span>
<div class="abs" style="left:1285.10px;top:252.10px;width:193.20px;height:20.60px;background:#fff;border:1px solid #929cab;border-radius:2px"></div>
<span class="t" style="left:1294.44px;top:258.00px;font-size:10.40px;color:#757575;transform:scaleX(0.9440);">@mention or reply</span>
<!-- status -->
<div class="abs" style="left:0.00px;top:748.80px;width:196.00px;height:14.00px;background:#f6f6f7"></div>
<div class="abs" style="left:1267.00px;top:750.20px;width:256.00px;height:12.00px;background:#f6f6f7"></div>
<div class="abs" style="left:1267.00px;top:750.00px;width:256.00px;height:1.00px;background:#e6e6e6"></div>
<span class="t" style="left:10.86px;top:756.00px;font-size:11.00px;color:#484644;transform:scaleX(0.8804);">Slide 1 of 6</span>
<span class="t" style="left:71.68px;top:756.00px;font-size:11.00px;color:#484644;transform:scaleX(0.8190);">English (U.S.)</span>
<div class="abs" style="left:1025.00px;top:756.20px;width:9.60px;height:10.00px;border:1px solid #484644;border-radius:2px"></div>
<span class="t" style="left:1038.24px;top:756.00px;font-size:11.00px;color:#484644;transform:scaleX(0.8627);">Notes</span>
<span class="t" style="left:1071.42px;top:756.00px;font-size:11.00px;color:#484644;transform:scaleX(0.8650);">Give Feedback to Microsoft</span>
<div class="abs" style="left:1191.90px;top:750.20px;width:31.80px;height:16.00px;background:#d6d6db;border-radius:4px"></div>
<div class="abs" style="left:1203.00px;top:756.60px;width:10.00px;height:9.00px;border:1.4px solid #484644;border-radius:1.5px"></div>
<div class="abs" style="left:1206.40px;top:759.40px;width:4.40px;height:4.00px;background:#484644"></div>
<div class="abs" style="left:1235.20px;top:755.80px;width:4.20px;height:4.20px;border:1px solid #605e5c;border-radius:1.2px"></div>
<div class="abs" style="left:1240.60px;top:755.80px;width:4.20px;height:4.20px;border:1px solid #605e5c;border-radius:1.2px"></div>
<div class="abs" style="left:1266.80px;top:756.20px;width:10.00px;height:1.40px;background:#484644"></div>
<div class="abs" style="left:1267.80px;top:758.60px;width:8.00px;height:6.00px;border:1px solid #605e5c"></div>
<div class="abs" style="left:1299.00px;top:759.70px;width:9.00px;height:1.20px;background:#484644"></div>
<div class="abs" style="left:1326.30px;top:759.60px;width:20.00px;height:1.30px;background:#c43e1c"></div>
<div class="abs" style="left:1346.00px;top:759.60px;width:70.80px;height:1.30px;background:#605e5c"></div>
<div class="abs" style="left:1340.60px;top:754.60px;width:10.80px;height:10.80px;background:#c43e1c;border:1.2px solid #fff;border-radius:50%"></div>
<div class="abs" style="left:1434.40px;top:759.70px;width:9.00px;height:1.20px;background:#484644"></div>
<div class="abs" style="left:1438.30px;top:756.00px;width:1.20px;height:8.00px;background:#484644"></div>
<span class="t" style="left:1459.51px;top:756.00px;font-size:11.00px;color:#484644;transform:scaleX(0.7897);">95%</span>
<svg class="abs" style="left:1492.00px;top:755.40px;" width="12.00" height="8.00" viewBox="0 0 12 8" fill="none"><path d="M1 7 V4.6 M11 7 V4.6 M4.2 7 V3 Q6 0.6 7.8 3 V7" stroke="#605e5c" stroke-width="1" fill="none"/></svg>
<!-- desktop strip -->
<div class="abs" style="left:1523.00px;top:0.00px;width:3.40px;height:762.00px;background:#f9f9f9"></div>
<div class="abs" style="left:-2.00px;top:3.00px;width:1525.60px;height:748.00px;border:1px solid #e9e9e9;border-left:none;border-bottom:none;border-radius:0 8px 0 0"></div>
<div class="abs" style="left:1526.20px;top:0.00px;width:9.80px;height:762.00px;background:#00a62c"></div>
<div class="abs" style="left:1526.20px;top:282.00px;width:9.80px;height:264.00px;background:#14a86e"></div>
<div class="abs" style="left:1531.70px;top:273.00px;width:3.00px;height:4.00px;background:#14a86e"></div>
<div class="abs" style="left:1532.20px;top:545.00px;width:4.00px;height:5.00px;background:#14a86e"></div>
<div class="abs" style="left:1526.20px;top:593.00px;width:9.80px;height:103.00px;background:#107a40"></div>
<div class="abs" style="left:1532.20px;top:593.00px;width:4.00px;height:6.00px;background:#00a62c"></div>
<div class="abs" style="left:1526.20px;top:695.00px;width:9.80px;height:67.00px;background:#020202"></div>
<div class="abs" style="left:1532.20px;top:695.00px;width:4.00px;height:6.00px;background:#107a40"></div>
<div class="abs" style="left:1526.20px;top:721.00px;width:9.80px;height:1.00px;background:#4a3526"></div>
</div>
</body>
</html>
